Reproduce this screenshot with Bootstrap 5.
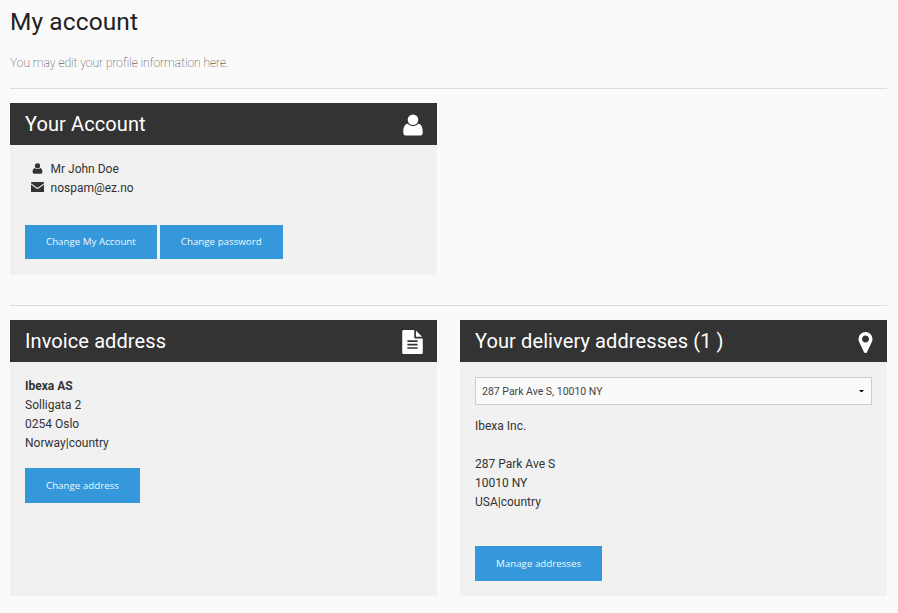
<!DOCTYPE html>
<html lang="en">
<head>
<meta charset="utf-8">
<meta name="viewport" content="width=device-width, initial-scale=1">
<title>My account</title>
<link rel="stylesheet" href="https://cdn.jsdelivr.net/npm/bootstrap@5.3.0/dist/css/bootstrap.min.css">
<style>
body{background:#fafafa;color:#333;font-family:Roboto,sans-serif;font-size:12px;line-height:19px}
.page{padding:5px 11px 0 10px}
.page-title{font-size:24.5px;line-height:34px;color:#222;font-weight:400;letter-spacing:.1px}
.intro{font-size:12px;font-weight:100;color:#222;margin:15px 0 15px;line-height:19px}
.rule{border-top:1px solid #ddd;margin:0 0 14px;opacity:1;color:#ddd}
.second-rule{margin-top:30px}
.panels{display:grid;grid-template-columns:427px 427px;column-gap:23px}
.panel{background:#f1f1f1}
.panel-head{background:#333;color:#fff;height:42px;padding:0 14.5px 0 15px}
.panel-head h2{font-size:20px;font-weight:400;line-height:42px;letter-spacing:.1px}
.panel-head svg{margin-top:2px}
.panel-body{padding:15px}
.panel svg{fill:currentColor;display:block}
.slot{width:13px;margin:0 6.5px 0 6px}
.slot svg{margin-top:-3px}
.btn-flat{--bs-btn-padding-x:21px;--bs-btn-padding-y:0;--bs-btn-border-width:0;--bs-btn-font-size:9.75px;--bs-btn-border-radius:0;--bs-btn-bg:#3498db;--bs-btn-color:#eff7fc;--bs-btn-hover-bg:#2980b9;--bs-btn-hover-color:#fff;font-family:"Open Sans",sans-serif;line-height:34px}
.btn-tall{line-height:35px}
.acct-actions{margin:27px 0 1px;gap:3px}
.invoice-action{margin-top:15px}
.delivery{margin:12px 0 34px}
.address-select{height:28px;font-size:10.5px;line-height:16px;padding:6px 20px 4px 6px;border:1px solid #ccc;border-radius:0;color:#444;background-color:#fafafa;background-image:url("data:image/svg+xml,%3Csvg xmlns='http://www.w3.org/2000/svg' viewBox='0 0 5 2'%3E%3Cpath d='M.5 0h4v1h-1v1h-2v-1h-1z' fill='%23000'/%3E%3C/svg%3E");background-size:5px 2px;background-position:right 7px center}
</style>
<script src="https://cdn.jsdelivr.net/npm/bootstrap@5.3.0/dist/js/bootstrap.bundle.min.js"></script>
</head>
<body>
<svg class="d-none" xmlns="http://www.w3.org/2000/svg">
<symbol id="user" viewBox="0 0 20 22"><circle cx="10" cy="5.7" r="5.3"/><path d="M4.600 9.800C1.800 10.300.3 13.300.3 17.300V18.700Q.3 21.600 3.300 21.600H16.700Q19.700 21.600 19.700 18.700V17.300C19.700 13.300 18.200 10.300 15.400 9.800Q13.100 12.200 10 12.200T4.600 9.800z"/></symbol>
<symbol id="mail" viewBox="0 0 13 10"><path d="M.5 0h12q.5 0 .5.5v.7L7.5 5.200q-1 .7-2 0L0 1.200V.5Q0 0 .5 0zM0 2.500l5 3.700q1.500 1 3 0l5-3.700v7q0 .5-.5.5H.5Q0 10 0 9.500z"/></symbol>
<symbol id="doc" viewBox="128 0 1536 1792"><path d="M1596 476q14 14 28 36h-472v-472q22 14 36 28zm-476 164h544v1056q0 40-28 68t-68 28h-1344q-40 0-68-28t-28-68v-1600q0-40 28-68t68-28h800v544q0 40 28 68t68 28zm160 736v-64q0-14-9-23t-23-9h-704q-14 0-23 9t-9 23v64q0 14 9 23t23 9h704q14 0 23-9t9-23zm0-256v-64q0-14-9-23t-23-9h-704q-14 0-23 9t-9 23v64q0 14 9 23t23 9h704q14 0 23-9t9-23zm0-256v-64q0-14-9-23t-23-9h-704q-14 0-23 9t-9 23v64q0 14 9 23t23 9h704q14 0 23-9t9-23z"/></symbol>
<symbol id="pin" viewBox="0 128 1024 1536"><path d="M768 640q0-106-75-181t-181-75-181 75-75 181 75 181 181 75 181-75 75-181zm256 0q0 109-33 179l-364 774q-16 33-47.500 52t-67.500 19-67.500-19-46.500-52l-365-774q-33-70-33-179 0-212 150-362t362-150 362 150 150 362z"/></symbol>
</svg>
<main class="page">
  <h1 class="page-title mb-0">My account</h1>
  <p class="intro">You may edit your profile information here.</p>
  <hr class="rule">
  <div class="panels">
    <section class="panel">
      <header class="panel-head d-flex justify-content-between align-items-center">
        <h2 class="m-0">Your Account</h2>
        <svg width="20" height="22"><use href="#user"/></svg>
      </header>
      <div class="panel-body">
        <div class="d-flex align-items-center"><span class="slot d-flex justify-content-center"><svg width="11" height="11"><use href="#user"/></svg></span>Mr John Doe</div>
        <div class="d-flex align-items-center"><span class="slot"><svg width="13" height="10"><use href="#mail"/></svg></span>nospam@ez.no</div>
        <div class="acct-actions d-flex"><button class="btn btn-flat" type="button">Change My Account</button><button class="btn btn-flat" type="button">Change password</button></div>
      </div>
    </section>
  </div>
  <hr class="rule second-rule">
  <div class="panels">
    <section class="panel">
      <header class="panel-head d-flex justify-content-between align-items-center">
        <h2 class="m-0">Invoice address</h2>
        <svg width="21" height="24"><use href="#doc"/></svg>
      </header>
      <div class="panel-body">
        <div><strong>Ibexa AS</strong><br>Solligata 2<br>0254 Oslo<br>Norway|country</div>
        <button class="btn btn-flat btn-tall invoice-action" type="button">Change address</button>
      </div>
    </section>
    <section class="panel">
      <header class="panel-head d-flex justify-content-between align-items-center">
        <h2 class="m-0">Your delivery addresses (1 )</h2>
        <svg width="15" height="21"><use href="#pin"/></svg>
      </header>
      <div class="panel-body">
        <select class="form-select address-select" aria-label="Delivery address"><option>287 Park Ave S, 10010 NY</option></select>
        <div class="delivery">Ibexa Inc.<br><br>287 Park Ave S<br>10010 NY<br>USA|country</div>
        <button class="btn btn-flat btn-tall" type="button">Manage addresses</button>
      </div>
    </section>
  </div>
</main>
</body>
</html>
